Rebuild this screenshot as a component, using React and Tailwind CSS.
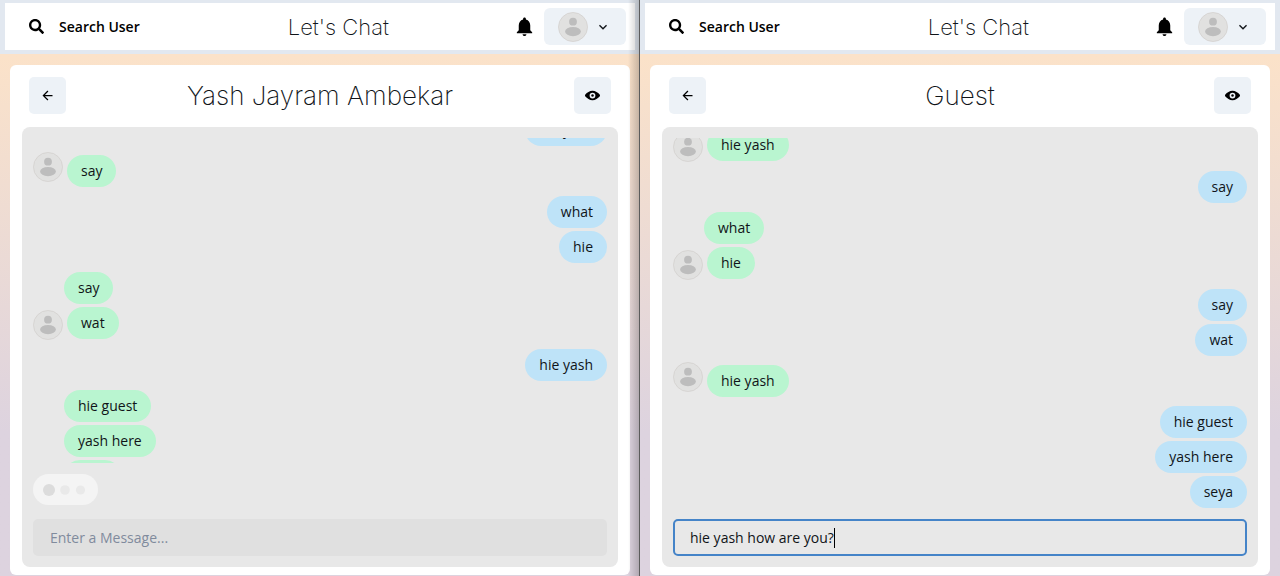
import React, { useState } from "react";
import { FaSearch } from "react-icons/fa";

function Icon({ size, children }) {
  return (
    <svg viewBox="0 0 24 24" width={size} height={size} fill="currentColor" aria-hidden="true" className="shrink-0">
      {children}
    </svg>
  );
}

const BellIcon = () => (
  <Icon size={23}>
    <path d="M12 22c1.1 0 2-.9 2-2h-4c0 1.1.89 2 2 2zm6-6v-5c0-3.07-1.64-5.64-4.5-6.32V4c0-.83-.67-1.5-1.5-1.5s-1.5.67-1.5 1.5v.68C7.63 5.36 6 7.92 6 11v5l-2 2v1h16v-1l-2-2z" />
  </Icon>
);

const ChevronIcon = () => (
  <Icon size={16}>
    <path d="M16.59 8.59L12 13.17 7.41 8.59 6 10l6 6 6-6z" />
  </Icon>
);

const BackIcon = () => (
  <Icon size={15}>
    <path d="M20 11H7.83l5.59-5.59L12 4l-8 8 8 8 1.41-1.41L7.83 13H20v-2z" />
  </Icon>
);

const ViewIcon = () => (
  <Icon size={15}>
    <path d="M23.432,10.524C20.787,7.614,16.4,4.538,12,4.6,7.6,4.537,3.213,7.615.568,10.524a2.211,2.211,0,0,0,0,2.948C3.182,16.351,7.507,19.4,11.839,19.4h.308c4.347,0,8.671-3.049,11.288-5.929A2.21,2.21,0,0,0,23.432,10.524ZM7.4,12A4.6,4.6,0,1,1,12,16.6,4.6,4.6,0,0,1,7.4,12Z" />
    <circle cx="12" cy="12" r="2" />
  </Icon>
);

function Avatar() {
  return (
    <svg viewBox="0 0 30 30" width="30" height="30" aria-hidden="true" className="shrink-0">
      <circle cx="15" cy="15" r="14.5" fill="#e1e1e0" stroke="#d3d0ce" strokeWidth="0.8" />
      <circle cx="15" cy="9.7" r="3.9" fill="#bdbdbd" />
      <ellipse cx="15" cy="19.6" rx="7.9" ry="4.6" fill="#bdbdbd" />
    </svg>
  );
}

function NavBar() {
  return (
    <header className="flex h-[54px] shrink-0 items-center justify-between border-x-[5px] border-t-[3px] border-b-4 border-[#e2e8f0] bg-white pr-[9px] pl-6">
      <button className="flex items-center gap-[15px] pr-6 text-[14px] font-semibold text-black">
        <FaSearch size={15} />
        Search User
      </button>
      <h1 className="font-['Inter',sans-serif] text-[22px] leading-8 font-extralight">Let's Chat</h1>
      <div className="flex items-center gap-2">
        <button aria-label="Notifications" className="text-black">
          <BellIcon />
        </button>
        <button aria-label="Account menu" className="flex h-[37px] items-center gap-[7px] rounded-md bg-[#edf2f7] pr-[15px] pl-[14px]">
          <Avatar />
          <ChevronIcon />
        </button>
      </div>
    </header>
  );
}

const GAPS = {
  none: "",
  tight: "mt-[3px]",
  near: "mt-[6px]",
  normal: "mt-[9px]",
};

function Message({ text, mine, avatar, gap }) {
  const bubble = "rounded-full px-[14px] py-[5px] leading-[22px] whitespace-nowrap";
  if (mine) {
    return (
      <li className={`flex shrink-0 justify-end ${GAPS[gap]}`}>
        <span className={`${bubble} bg-[#bee3f8]`}>{text}</span>
      </li>
    );
  }
  if (avatar === "above") {
    return (
      <li className={`flex shrink-0 items-start gap-1 ${GAPS[gap]}`}>
        <Avatar />
        <span className={`${bubble} mt-[3px] bg-[#b9f5d0]`}>{text}</span>
      </li>
    );
  }
  if (avatar === "below") {
    return (
      <li className={`flex shrink-0 items-start gap-1 ${GAPS[gap]}`}>
        <div className="pt-[3px]">
          <Avatar />
        </div>
        <span className={`${bubble} bg-[#b9f5d0]`}>{text}</span>
      </li>
    );
  }
  return (
    <li className={`flex shrink-0 pl-[31px] ${GAPS[gap]}`}>
      <span className={`${bubble} bg-[#b9f5d0]`}>{text}</span>
    </li>
  );
}

function TypingIndicator() {
  return (
    <div role="status" aria-label="Typing" className="mt-[11px] flex h-[31px] w-[65px] shrink-0 items-center rounded-full bg-[#f4f4f4] pl-[10px]">
      <svg viewBox="0 0 44 12" width="44" height="12" aria-hidden="true">
        <circle cx="6" cy="6" r="6" fill="#dcdcdc" />
        <circle cx="22" cy="6" r="4.8" fill="#e9e9e9" />
        <circle cx="37.5" cy="6" r="4.6" fill="#e9e9e9" />
      </svg>
    </div>
  );
}

function MessageInput({ id, initial, active }) {
  const [value, setValue] = useState(initial);
  return (
    <div className="relative shrink-0">
      <label htmlFor={id} className="sr-only">
        Message
      </label>
      <input
        id={id}
        value={value}
        onChange={(e) => setValue(e.target.value)}
        placeholder="Enter a Message..."
        className={
          active
            ? "block h-[37px] w-full rounded-[5px] border-2 border-[#4584c8] bg-[#e8e8e8] px-[15px] caret-transparent outline-none"
            : "block h-[37px] w-full rounded-[5px] border-2 border-[#e0e0e0] bg-[#e0e0e0] px-[15px] outline-none placeholder:text-[#808b9d]"
        }
      />
      {active && (
        <div aria-hidden="true" className="pointer-events-none absolute inset-y-0 left-[17px] flex items-center">
          <span className="invisible whitespace-pre">{value}</span>
          <span className="h-5 w-px bg-black" />
        </div>
      )}
    </div>
  );
}

function ChatWindow({ id, title, messages, typing, draft, active }) {
  return (
    <section className="flex h-full min-w-0 flex-col bg-linear-to-b from-[#fbe2c9] from-10% to-[#ddd3df] to-75%">
      <NavBar />
      <div className="mx-[10px] mt-[11px] mb-px flex min-h-0 flex-1 flex-col rounded-md bg-white px-3 pt-3 pb-2">
        <div className="flex shrink-0 items-center justify-between px-[7px]">
          <button aria-label="Back" className="flex size-[37px] items-center justify-center rounded-[5px] bg-[#edf2f7] text-black">
            <BackIcon />
          </button>
          <h2 className="font-['Inter',sans-serif] text-[26px] leading-9 font-extralight">{title}</h2>
          <button aria-label="View profile" className="flex size-[37px] items-center justify-center rounded-[5px] bg-[#edf2f7] text-black">
            <ViewIcon />
          </button>
        </div>
        <div className="mt-[13px] flex min-h-0 flex-1 flex-col rounded-lg bg-[#e8e8e8] p-[11px]">
          <ul className={`flex min-h-0 flex-1 flex-col justify-end overflow-hidden ${typing ? "" : "pb-[11px]"}`}>
            {messages.map((m, i) => (
              <Message key={i} {...m} />
            ))}
            {typing && <li aria-hidden="true" className="-mt-[29px] shrink-0" />}
          </ul>
          {typing && (
            <div className="pb-[14px]">
              <TypingIndicator />
            </div>
          )}
          <MessageInput id={id} initial={draft} active={active} />
        </div>
      </div>
    </section>
  );
}

const yashMessages = [
  { text: "hie yash", mine: true, gap: "none" },
  { text: "say", avatar: "above", gap: "near" },
  { text: "what", mine: true, gap: "normal" },
  { text: "hie", mine: true, gap: "tight" },
  { text: "say", gap: "normal" },
  { text: "wat", avatar: "below", gap: "tight" },
  { text: "hie yash", mine: true, gap: "normal" },
  { text: "hie guest", gap: "normal" },
  { text: "yash here", gap: "tight" },
  { text: "seya", gap: "tight" },
];

const guestMessages = [
  { text: "hie yash", avatar: "below", gap: "none" },
  { text: "say", mine: true, gap: "normal" },
  { text: "what", gap: "normal" },
  { text: "hie", avatar: "below", gap: "tight" },
  { text: "say", mine: true, gap: "normal" },
  { text: "wat", mine: true, gap: "tight" },
  { text: "hie yash", avatar: "above", gap: "near" },
  { text: "hie guest", mine: true, gap: "normal" },
  { text: "yash here", mine: true, gap: "tight" },
  { text: "seya", mine: true, gap: "tight" },
];

export default function App() {
  return (
    <main className="grid h-screen grid-cols-2 font-['Open_Sans','Noto_Sans',sans-serif] text-[14px] text-[#101418]">
      <div className="relative h-full min-h-0 min-w-0">
        <ChatWindow id="message-yash" title="Yash Jayram Ambekar" messages={yashMessages} typing draft="" />
        <div className="pointer-events-none absolute inset-y-0 right-0 w-3 border-r border-[#5c5c5c] bg-linear-to-r from-transparent to-black/20" />
      </div>
      <div className="h-full min-h-0 min-w-0">
        <ChatWindow id="message-guest" title="Guest" messages={guestMessages} draft="hie yash how are you?" active />
      </div>
    </main>
  );
}
